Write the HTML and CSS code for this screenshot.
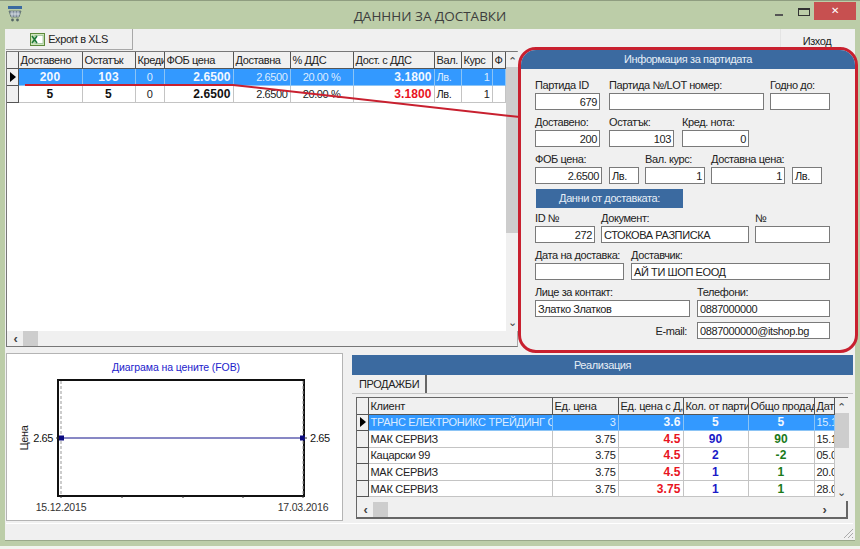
FILE: index.html
```html
<!DOCTYPE html>
<html lang="bg">
<head>
<meta charset="utf-8">
<title>ДАНННИ ЗА ДОСТАВКИ</title>
<link rel="stylesheet" href="styles.css">
</head>
<body>
<div class="window">
  <header class="titlebar">
    <svg class="app-icon" width="16" height="16" viewBox="0 0 16 16"><rect x="1" y="0" width="14" height="3" fill="#3b6aa0"/><path d="M2 5h12l-2 6H4z" fill="#8a97a8" stroke="#566" stroke-width=".7"/><path d="M5 5v6M8 5v6M11 5v6M3 8h10" stroke="#e8eef0" stroke-width=".7"/><circle cx="5.500" cy="14" r="1.400" fill="#566"/><circle cx="10.500" cy="14" r="1.400" fill="#566"/></svg>
    <h1 class="title">ДАНННИ ЗА ДОСТАВКИ</h1>
    <div class="controls">
      <span class="ctl-min"></span>
      <span class="ctl-max"></span>
      <span class="ctl-close">✕</span>
    </div>
  </header>

  <main class="content">
    <div class="toolbar">
      <button class="btn btn-export">
        <svg width="15" height="13" viewBox="0 0 15 13"><rect x=".5" y=".5" width="14" height="12" fill="#cfe6bd" stroke="#5c8a3c"/><rect x="5" y="2.500" width="8" height="8" fill="#fff" stroke="#7fb07f" stroke-width=".6"/><path d="M2 3l5 7M7 3l-5 7" stroke="#1f7a3a" stroke-width="1.600"/></svg>
        <span>Export в XLS</span>
      </button>
      <button class="btn btn-exit">Изход</button>
    </div>

    <section class="top-grid">
      <div class="tg-body">
        <table class="table t1">
          <colgroup><col class="c11"><col class="c64"><col class="c53"><col class="c29"><col class="c69"><col class="c57"><col class="c63"><col class="c81"><col class="c27"><col class="c31"><col class="c13"></colgroup>
          <thead><tr><th></th><th>Доставено</th><th>Остатък</th><th>Креди</th><th>ФОБ цена</th><th>Доставна</th><th>% ДДС</th><th>Дост. с ДДС</th><th>Вал.</th><th>Курс</th><th>Ф</th></tr></thead>
          <tbody>
            <tr class="sel"><td class="ind"><span class="arrow"></span></td><td class="ctr b">200</td><td class="ctr b">103</td><td class="ctr">0</td><td class="r b">2.6500</td><td class="r">2.6500</td><td class="ctr">20.00 %</td><td class="r b">3.1800</td><td>Лв.</td><td class="r">1</td><td></td></tr>
            <tr><td class="ind"></td><td class="ctr b">5</td><td class="ctr b">5</td><td class="ctr">0</td><td class="r b">2.6500</td><td class="r">2.6500</td><td class="ctr">20.00 %</td><td class="r b red">3.1800</td><td>Лв.</td><td class="r">1</td><td></td></tr>
          </tbody>
        </table>
        <div class="vscroll">
          <span class="chev">⌃</span>
          <span class="thumb-v tall"></span>
          <span class="chev down">⌄</span>
        </div>
      </div>
      <div class="hscroll">
        <span class="chev-h">‹</span><span class="thumb-h"></span>
      </div>
    </section>

    <section class="bottom">
      <div class="chart-panel">
        <svg class="chart" width="335" height="166" viewBox="0 0 335 166">
          <text x="169" y="17" class="ch-title" text-anchor="middle">Диаграма на цените (FOB)</text>
          <rect x="51" y="26" width="246" height="116" fill="#fff" stroke="#111" stroke-width="2"/>
          <path d="M54 27v114M296 27v114" stroke="#999" stroke-dasharray="3 2"/>
          <path d="M54 84H296" stroke="#10108a" stroke-width="1"/>
          <rect x="52" y="81.500" width="5" height="5" fill="#0a0a80"/>
          <rect x="293" y="81.500" width="5" height="5" fill="#0a0a80"/>
          <path d="M49 84h3M297 84h3M54 142v2M115 142v2M176 142v2M236 142v2M296 142v2" stroke="#333"/>
          <text x="46" y="88" class="ch-val" text-anchor="end">2.65</text>
          <text x="303" y="88" class="ch-val">2.65</text>
          <text x="21" y="84" class="ch-axis" text-anchor="middle" transform="rotate(-90 21 84)">Цена</text>
          <text x="54" y="157" class="ch-date" text-anchor="middle">15.12.2015</text>
          <text x="296" y="157" class="ch-date" text-anchor="middle">17.03.2016</text>
        </svg>
      </div>

      <div class="sales">
        <div class="blue-head">Реализация</div>
        <div class="tabs"><span class="tab">ПРОДАЖБИ</span></div>
        <div class="sales-frame">
          <div class="tg-body s-body">
            <table class="table t2">
              <colgroup><col class="c11"><col class="c184"><col class="c66"><col class="c65"><col class="c65"><col class="c66"><col class="c20"></colgroup>
              <thead><tr><th></th><th>Клиент</th><th>Ед. цена</th><th>Ед. цена с Д,</th><th>Кол. от партии</th><th>Общо продад</th><th>Дат</th></tr></thead>
              <tbody>
                <tr class="sel"><td class="ind"><span class="arrow"></span></td><td>ТРАНС ЕЛЕКТРОНИКС ТРЕЙДИНГ ОО</td><td class="r">3</td><td class="r b">3.6</td><td class="ctr b">5</td><td class="ctr b">5</td><td>15.1</td></tr>
                <tr><td class="ind"></td><td>МАК СЕРВИЗ</td><td class="r">3.75</td><td class="r b red">4.5</td><td class="ctr b blue">90</td><td class="ctr b green">90</td><td>15.1</td></tr>
                <tr><td class="ind"></td><td>Кацарски 99</td><td class="r">3.75</td><td class="r b red">4.5</td><td class="ctr b blue">2</td><td class="ctr b green">-2</td><td>05.0</td></tr>
                <tr><td class="ind"></td><td>МАК СЕРВИЗ</td><td class="r">3.75</td><td class="r b red">4.5</td><td class="ctr b blue">1</td><td class="ctr b green">1</td><td>20.0</td></tr>
                <tr><td class="ind"></td><td>МАК СЕРВИЗ</td><td class="r">3.75</td><td class="r b red">3.75</td><td class="ctr b blue">1</td><td class="ctr b green">1</td><td>28.0</td></tr>
              </tbody>
            </table>
            <div class="vscroll">
              <span class="chev">⌃</span>
              <span class="thumb-v short"></span>
              <span class="chev down">⌄</span>
            </div>
          </div>
          <div class="hscroll s-h">
            <span class="chev-h">‹</span><span class="thumb-h"></span><span class="chev-h end">›</span>
          </div>
        </div>
      </div>
    </section>
    <footer class="status"><svg class="grip" width="12" height="12" viewBox="0 0 12 12"><path d="M11 2L2 11M11 6L6 11M11 10L10 11" stroke="#aaa"/></svg></footer>
  </main>

  <svg class="callout-line" width="520" height="120" viewBox="0 0 520 120"><path d="M25 85H233L520 117" fill="none" stroke="#c8202f" stroke-width="2"/></svg>

  <aside class="info">
    <div class="blue-head info-head">Информация за партидата</div>
    <div class="form">
      <div class="row">
        <div class="field w65 m9"><label>Партида ID</label><div class="inp r">679</div></div>
        <div class="field w155 m6"><label>Партида №/LOT номер:</label><div class="inp"></div></div>
        <div class="field w60"><label>Годно до:</label><div class="inp"></div></div>
      </div>
      <div class="row">
        <div class="field w65 m9"><label>Доставено:</label><div class="inp r">200</div></div>
        <div class="field w65 m8"><label>Остатък:</label><div class="inp r">103</div></div>
        <div class="field w67"><label>Кред. нота:</label><div class="inp r">0</div></div>
      </div>
      <div class="row">
        <div class="field w67 m7"><label>ФОБ цена:</label><div class="inp r">2.6500</div></div>
        <div class="field w30 m6"><label></label><div class="inp">Лв.</div></div>
        <div class="field w60 m6"><label>Вал. курс:</label><div class="inp r">1</div></div>
        <div class="field w74 m7"><label>Доставна цена:</label><div class="inp r">1</div></div>
        <div class="field w30"><label></label><div class="inp">Лв.</div></div>
      </div>
      <div class="sub-head">Данни от доставката:</div>
      <div class="row row-tight">
        <div class="field w60 m6"><label>ID №</label><div class="inp r">272</div></div>
        <div class="field w148 m6"><label>Документ:</label><div class="inp">СТОКОВА РАЗПИСКА</div></div>
        <div class="field w75"><label>№</label><div class="inp"></div></div>
      </div>
      <div class="row">
        <div class="field w89 m7"><label>Дата на доставка:</label><div class="inp"></div></div>
        <div class="field w199"><label>Доставчик:</label><div class="inp">АЙ ТИ ШОП ЕООД</div></div>
      </div>
      <div class="row">
        <div class="field w155 m7"><label>Лице за контакт:</label><div class="inp">Златко Златков</div></div>
        <div class="field w133"><label>Телефони:</label><div class="inp">0887000000</div></div>
      </div>
      <div class="row row-mail">
        <span class="mail-label">E-mail:</span>
        <div class="field w133"><div class="inp">0887000000@itshop.bg</div></div>
      </div>
    </div>
  </aside>
</div>
</body>
</html>
```
FILE: styles.css
```css
* { box-sizing: border-box; }
html, body { margin: 0; padding: 0; }
body { width: 860px; height: 549px; overflow: hidden; font-family: "Liberation Sans", Arial, sans-serif; font-size: 11px; letter-spacing: -.4px; color: #111; }

.window { position: relative; width: 860px; height: 549px; background: #bccda8; border-top: 1px solid #8f9d80; border-bottom: 3px solid #f2f4ee; display: flex; flex-direction: column; }
.titlebar { height: 28px; flex: none; display: flex; align-items: center; position: relative; padding-left: 7px; }
.app-icon { margin-top: -2px; }
.title { position: absolute; left: 0; right: 0; top: 6px; margin: 0; text-align: center; font-family: "Open Sans", sans-serif; font-size: 13.500px; font-weight: 400; line-height: 18px; letter-spacing: 0; color: #3d3d3d; }
.controls { position: absolute; left: 775px; top: 1px; width: 81px; height: 18px; display: flex; align-items: flex-start; }
.ctl-min { width: 8px; height: 2px; background: #555; margin-top: 12px; }
.ctl-max { width: 12px; height: 8px; border: 1px solid #333; border-top-width: 2px; margin: 6px 0 0 15px; }
.ctl-close { width: 42px; height: 18px; margin-left: 4px; background: #c75050; color: #fff; font-size: 10px; line-height: 18px; text-align: center; }

.content { flex: none; margin: 0 5px; height: 512px; background: #f0f0f0; display: flex; flex-direction: column; border-bottom: 1px solid #9aa88a; }
.toolbar { height: 22px; flex: none; display: flex; justify-content: space-between; background: #f0f0f0; padding-left: 1px; padding-right: 2px; }
.btn { height: 21px; font: 11px "Liberation Sans", sans-serif; letter-spacing: -.4px; color: #222; background: #f0f0f0; border: 0; padding: 0; border-right: 1px solid #a8a8a8; border-bottom: 1px solid #a8a8a8; }
.btn-export { width: 127px; display: flex; align-items: center; justify-content: center; gap: 3px; }
.btn-exit { width: 73px; padding-top: 2px; border-right: 0; border-left: 1px solid #e4e4e4; border-bottom: 0; }

.top-grid { height: 296px; flex: none; margin-left: 1px; width: 512px; background: #fff; border: 1px solid #777; border-right-color: #aaa; display: flex; flex-direction: column; }
.tg-body { flex: 1; display: flex; min-height: 0; justify-content: space-between; align-items: stretch; background: #fff; }
.table { table-layout: fixed; border-collapse: collapse; flex: none; align-self: flex-start; }
.t1 { width: 498px; }
.t2 { width: 477px; letter-spacing: -.3px; }
.c11 { width: 11px; } .c13 { width: 13px; } .c20 { width: 20px; } .c27 { width: 27px; } .c29 { width: 29px; } .c31 { width: 31px; }
.c53 { width: 53px; } .c57 { width: 57px; } .c63 { width: 63px; } .c64 { width: 64px; } .c65 { width: 65px; } .c66 { width: 66px; } .c69 { width: 69px; } .c81 { width: 81px; } .c184 { width: 184px; }

.table th { height: 16px; padding: 0 2px; font-weight: 400; text-align: left; background: #f0f0f0; border-right: 1px solid #555; border-bottom: 1px solid #555; white-space: nowrap; overflow: hidden; color: #222; }
.table td { height: 17px; line-height: 14px; padding: 0 2px; border-right: 1px solid #c4c4c4; border-bottom: 1px solid #c4c4c4; white-space: nowrap; overflow: hidden; background: #fff; color: #222; }
.t2 td { height: 16.600px; }
.table td.ind { background: #f0f0f0; border-right: 1px solid #555; border-bottom: 1px solid #555; padding: 0 0 0 3px; }
.table tr.sel td { background: #3399ff; color: #dcecff; border-color: #8cc4f5; }
.table tr.sel td.ind { background: #f0f0f0; border-color: #555; }
.arrow { display: block; width: 0; height: 0; border-left: 6px solid #000; border-top: 5px solid transparent; border-bottom: 5px solid transparent; }
.r { text-align: right; }
.ctr { text-align: center; }
.table .b { font-weight: 700; font-size: 12px; letter-spacing: .1px; color: #111; }
.table .red { color: #e8141e; }
.table .blue { color: #1a1ac8; }
.table .green { color: #1a7a1a; }
.table tr.sel .b { color: #f2f8ff; }

.vscroll { width: 14px; flex: none; background: #f0f0f0; display: flex; flex-direction: column; align-items: stretch; }
.chev { height: 15px; flex: none; text-align: center; font-size: 11px; line-height: 18px; color: #444; }
.chev.down { margin-top: auto; line-height: 12px; }
.thumb-v { display: block; background: #cdcdcd; }
.thumb-v.tall { height: 166px; }
.thumb-v.short { height: 35px; }
.hscroll { height: 15px; flex: none; background: #f0f0f0; display: flex; align-items: center; padding-left: 2px; }
.chev-h { width: 13px; text-align: center; font-size: 13px; line-height: 13px; color: #444; font-weight: 700; }
.chev-h.end { margin-left: auto; margin-right: 15px; }
.thumb-h { width: 15px; height: 15px; background: #cdcdcd; margin-left: 1px; }

.bottom { height: 175px; flex: none; display: flex; margin-top: 1px; padding-right: 2px; }
.chart-panel { width: 337px; height: 168px; margin: 5px 0 0 1px; background: #fff; border: 1px solid #b4b4b4; flex: none; }
.chart { display: block; }
.ch-title { font: 10.500px "Liberation Sans", sans-serif; letter-spacing: -.1px; fill: #2222cc; }
.ch-val { font: 11px "Liberation Sans", sans-serif; fill: #111; }
.ch-axis { font: 11px "Liberation Sans", sans-serif; fill: #222; }
.ch-date { font: 10.500px "Liberation Sans", sans-serif; letter-spacing: -.2px; fill: #333; }

.sales { flex: 1; margin-left: 9px; margin-top: 7px; display: flex; flex-direction: column; min-width: 0; }
.blue-head { height: 20px; flex: none; background: #3b6aa0; color: #e6eef6; text-align: center; line-height: 20px; }
.tabs { height: 19px; flex: none; padding-left: 1px; border-bottom: 1px solid #c8c8c8; }
.tab { display: inline-block; width: 74px; height: 18px; padding-left: 6px; line-height: 18px; background: #f0f0f0; border-right: 2px solid #666; color: #222; }
.sales-frame { height: 122px; flex: none; margin: 3px 5px 0 4px; border: 1px solid #666; border-right-width: 2px; border-bottom-width: 2px; background: #f0f0f0; display: flex; flex-direction: column; }
.s-body { flex: none; height: 103px; background: #f0f0f0; justify-content: flex-start; }
.s-h { height: 16px; }

.status { height: 17px; flex: none; margin: 0 2px 0 1px; border-top: 1px solid #fff; position: relative; background: #f0f0f0; }
.grip { position: absolute; right: -1px; bottom: 1px; }

.callout-line { position: absolute; left: 0; top: -1px; pointer-events: none; }

.info { position: absolute; left: 518px; top: 46px; width: 340px; height: 306px; border: 3px solid #c8202f; border-radius: 18px; background: #f0f0f0; overflow: hidden; }
.info-head { height: 19px; line-height: 19px; }
.form { padding: 9px 0 0 14px; display: flex; flex-direction: column; gap: 5px; }
.row { display: flex; align-items: flex-start; }
.row-tight { margin-top: -2px; }
.field { display: flex; flex-direction: column; flex: none; }
.field label { height: 15px; line-height: 15px; color: #222; white-space: nowrap; }
.inp { height: 17px; background: #fff; border: 1px solid #7a7a7a; padding: 0 2px; line-height: 16px; color: #222; white-space: nowrap; overflow: hidden; }
.sub-head { width: 147px; height: 19px; margin-left: 1px; background: #3b6aa0; color: #e6eef6; text-align: center; line-height: 19px; }
.row-mail { justify-content: flex-end; width: 295px; align-items: center; }
.mail-label { margin-right: 10px; color: #222; }
.w30 { width: 30px; } .w60 { width: 60px; } .w65 { width: 65px; } .w67 { width: 67px; } .w74 { width: 74px; } .w75 { width: 75px; } .w89 { width: 89px; } .w133 { width: 133px; } .w148 { width: 148px; } .w155 { width: 155px; } .w199 { width: 199px; }
.m6 { margin-right: 6px; } .m7 { margin-right: 7px; } .m8 { margin-right: 8px; } .m9 { margin-right: 9px; }
```
